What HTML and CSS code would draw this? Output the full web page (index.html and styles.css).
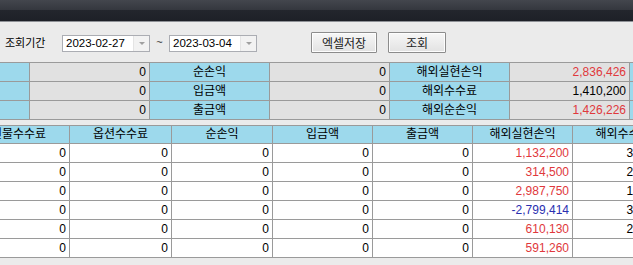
FILE: index.html
```html
<!DOCTYPE html>
<html lang="ko">
<head>
  <meta charset="UTF-8">
  <meta name="viewport" content="width=device-width, initial-scale=1.0">
  <title>기간별 손익</title>
  <link rel="stylesheet" href="styles.css">
</head>
<body>
  <div class="titlebar"></div>

  <div class="toolbar">
    <span class="label">조회기간</span>
    <div class="date">
      <span class="date-text">2023-02-27</span>
      <span class="drop"></span>
    </div>
    <span class="tilde">~</span>
    <div class="date">
      <span class="date-text">2023-03-04</span>
      <span class="drop"></span>
    </div>
    <button class="btn btn-excel">엑셀저장</button>
    <button class="btn btn-search">조회</button>
  </div>

  <div class="summary-wrap">
    <table class="summary">
      <colgroup>
        <col style="width:30px"><col style="width:120px"><col style="width:120px"><col style="width:120px">
        <col style="width:120px"><col style="width:120px"><col style="width:120px">
      </colgroup>
      <tr>
        <th></th><td>0</td><th>순손익</th><td>0</td><th>해외실현손익</th><td class="red">2,836,426</td><th></th>
      </tr>
      <tr>
        <th></th><td>0</td><th>입금액</th><td>0</td><th>해외수수료</th><td>1,410,200</td><th></th>
      </tr>
      <tr>
        <th></th><td>0</td><th>출금액</th><td>0</td><th>해외순손익</th><td class="red">1,426,226</td><th></th>
      </tr>
    </table>
  </div>

  <div class="grid-wrap">
    <table class="grid">
      <colgroup>
        <col style="width:102px"><col style="width:102px"><col style="width:101px"><col style="width:100px">
        <col style="width:100px"><col style="width:100px"><col style="width:101px">
      </colgroup>
      <thead>
        <tr>
          <th>선물수수료</th><th>옵션수수료</th><th>순손익</th><th>입금액</th><th>출금액</th><th>해외실현손익</th><th>해외수수료</th>
        </tr>
      </thead>
      <tbody>
        <tr><td>0</td><td>0</td><td>0</td><td>0</td><td>0</td><td class="red">1,132,200</td><td>339,600</td></tr>
        <tr><td>0</td><td>0</td><td>0</td><td>0</td><td>0</td><td class="red">314,500</td><td>281,200</td></tr>
        <tr><td>0</td><td>0</td><td>0</td><td>0</td><td>0</td><td class="red">2,987,750</td><td>167,300</td></tr>
        <tr><td>0</td><td>0</td><td>0</td><td>0</td><td>0</td><td class="blue">-2,799,414</td><td>352,800</td></tr>
        <tr><td>0</td><td>0</td><td>0</td><td>0</td><td>0</td><td class="red">610,130</td><td>233,300</td></tr>
        <tr><td>0</td><td>0</td><td>0</td><td>0</td><td>0</td><td class="red">591,260</td><td>36,000</td></tr>
      </tbody>
    </table>
  </div>
</body>
</html>
```

FILE: styles.css
```css
body {
  margin: 0;
  padding: 0;
  background: #ebebeb;
  font-family: 'Liberation Sans', 'Noto Sans CJK KR', sans-serif;
  font-size: 12px;
  color: #000;
  overflow: hidden;
}

.titlebar {
  height: 21px;
  background: linear-gradient(#43464d 0, #34373e 10px, #23262d 10px, #1d2027 21px);
  border-bottom: 1px solid #8e9196;
}

.toolbar {
  display: flex;
  align-items: center;
  height: 40px;
  padding-left: 5px;
}

.label {
  width: 57px;
  font-size: 11px;
}

.date {
  display: flex;
  align-items: center;
  box-sizing: border-box;
  width: 88px;
  height: 17px;
  background: #fff;
  border: 1px solid #abadb3;
  margin-top: 2px;
}

.date-text {
  flex: 1;
  padding-left: 3px;
  font-size: 11.5px;
  line-height: 15px;
}

.drop {
  position: relative;
  width: 15px;
  height: 15px;
  background: #f2f2f2;
  border-left: 1px solid #e4e4e4;
}

.drop::after {
  content: '';
  position: absolute;
  left: 5px;
  top: 6px;
  border-left: 3px solid transparent;
  border-right: 3px solid transparent;
  border-top: 3px solid #a0a0a0;
}

.tilde {
  width: 19px;
  text-align: center;
  font-size: 11px;
  color: #333;
}

.btn {
  box-sizing: border-box;
  height: 21px;
  padding: 0;
  font-family: inherit;
  font-size: 12px;
  color: #222;
  background: linear-gradient(#f7f7f7, #e2e2e2);
  border: 1px solid #8c8c8c;
  box-shadow: inset 0 0 0 1px #fdfdfd;
  border-radius: 1px;
}

.btn-excel {
  width: 66px;
  margin-left: 54px;
}

.btn-search {
  width: 58px;
  margin-left: 11px;
}

.summary-wrap,
.grid-wrap {
  overflow: hidden;
  white-space: nowrap;
}

table {
  table-layout: fixed;
  border-collapse: separate;
  border-spacing: 0;
}

.summary {
  width: 750px;
  border-top: 1px solid #9a9a9a;
}

.summary th,
.summary td,
.grid th,
.grid td {
  box-sizing: border-box;
  padding: 0 3px;
  border-right: 1px solid #9a9a9a;
  border-bottom: 1px solid #9a9a9a;
  overflow: hidden;
  white-space: nowrap;
}

.summary th,
.summary td {
  height: 19px;
  line-height: 18px;
}

.summary th {
  font-weight: normal;
  text-align: center;
  background: #9dd9ec;
}

.summary td {
  text-align: right;
  background: #e1e1e1;
}

.grid-wrap {
  margin-top: 5px;
}

.grid {
  width: 706px;
  margin-left: -32px;
  border-top: 1px solid #9a9a9a;
}

.grid th {
  height: 18px;
  line-height: 17px;
  font-weight: normal;
  text-align: center;
  background: #9dd9ec;
}

.grid td {
  height: 19px;
  line-height: 18px;
  text-align: right;
  background: #fff;
}

.red {
  color: #e0383c;
}

.blue {
  color: #2a2fb0;
}
```
